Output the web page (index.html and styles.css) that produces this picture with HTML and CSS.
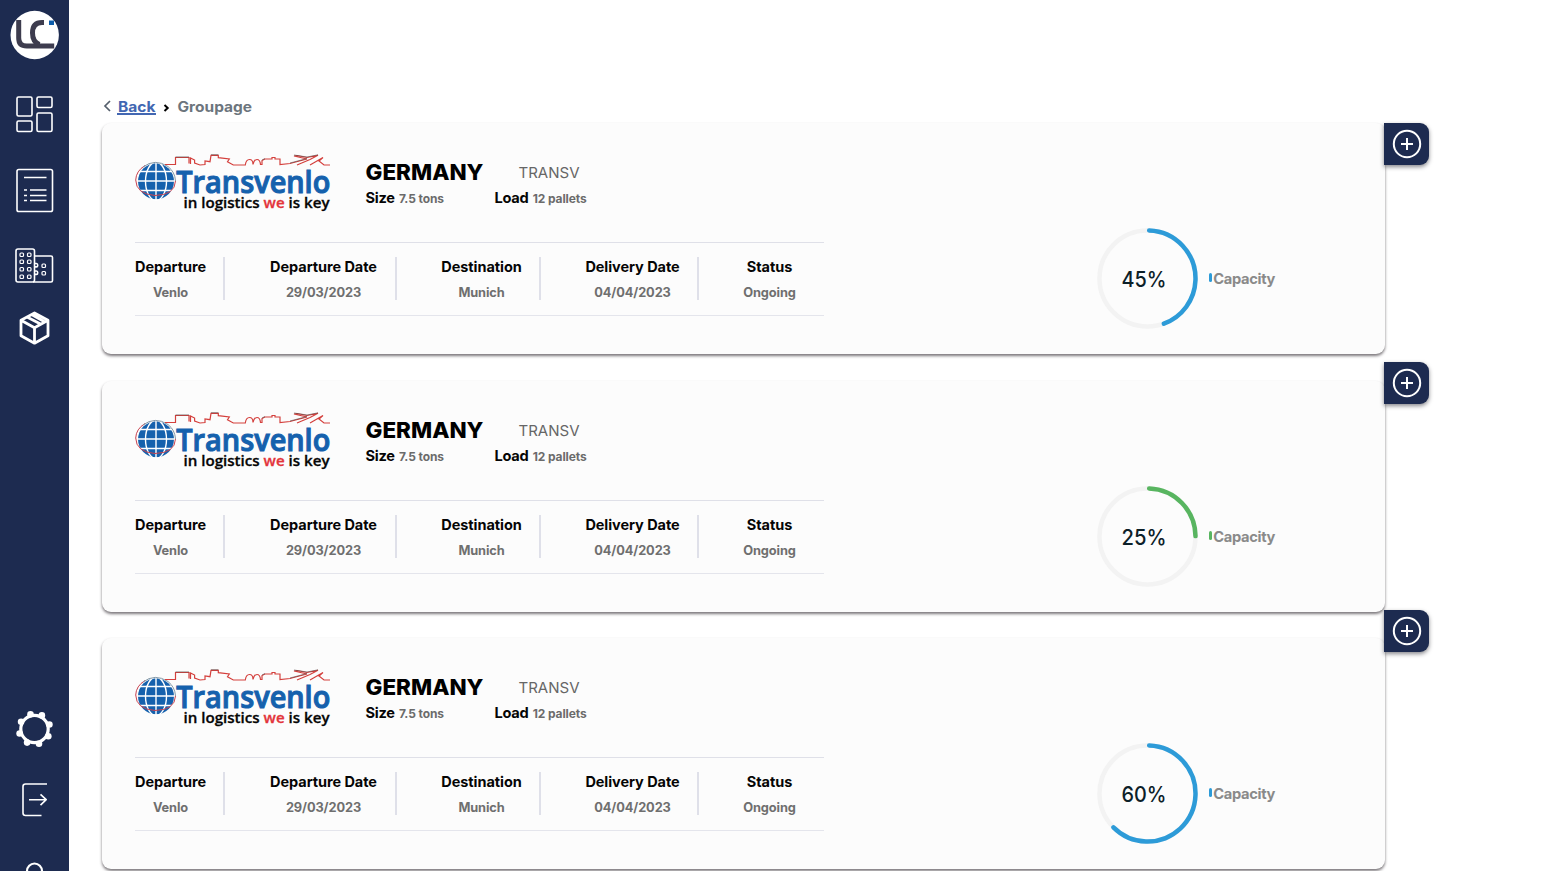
FILE: index.html
```html
<!DOCTYPE html>
<html lang="en">
<head>
<meta charset="utf-8">
<title>Groupage</title>
<link rel="stylesheet" href="styles.css">
</head>
<body>
<aside class="sidebar">
  <svg class="brand" width="50" height="50" viewBox="0 0 50 50"><circle cx="24.700" cy="25" r="24.200" fill="#fff"/><path d="M8.700 10v18q0 8 8 8h27.500M34 12.500h-2q-9.500 0-9.500 10.500 0 9 7 11.500" fill="none" stroke="#3d3c4e" stroke-width="5"/><path d="M39 10.500h5v4.500h-5z" fill="#0b5cab"/></svg>
  <nav class="nav">
    <svg class="i-grid" width="38" height="38" viewBox="0 0 38 38"><rect x="1" y="1" width="15" height="19" rx="1.500"/><rect x="21" y="1" width="15" height="10.500" rx="1.500"/><rect x="1" y="25" width="15" height="10.500" rx="1.500"/><rect x="21" y="17" width="15" height="18.500" rx="1.500"/></svg>
    <svg class="i-list" width="38" height="45" viewBox="0 0 38 45"><rect x="1" y="1.500" width="35.500" height="42" rx="1.800"/><path d="M8 9.500h22.500M8 22h3M14 22h16.500M8 27.500h3M14 27.500h16.500M8 32.500h3M14 32.500h16.500"/></svg>
    <svg class="i-building" width="39" height="36" viewBox="0 0 39 36"><rect x="1" y="1" width="18.500" height="33" rx="2"/><path d="M19.500 8H36q1.500 0 1.500 1.500V32.500Q37.500 34 36 34H18M20 15.500h1.500q1.200 0 1.200 1.700t-1.200 1.700H20M20 23h1.500q1.200 0 1.200 1.700t-1.200 1.700H20"/><g stroke-width="1.200"><rect x="5" y="5" width="3.500" height="3.500" rx="1"/><rect x="12.500" y="5" width="3.500" height="3.500" rx="1"/><rect x="5" y="12" width="3.500" height="3.500" rx="1"/><rect x="12.500" y="12" width="3.500" height="3.500" rx="1"/><rect x="5" y="19.500" width="3.500" height="3.500" rx="1"/><rect x="12.500" y="19.500" width="3.500" height="3.500" rx="1"/><rect x="5" y="27" width="3.500" height="3.500" rx="1"/><rect x="12.500" y="27" width="3.500" height="3.500" rx="1"/><rect x="27" y="16" width="3.500" height="3.500" rx="1"/><rect x="27" y="23.500" width="3.500" height="3.500" rx="1"/></g></svg>
    <svg class="i-box" width="32" height="34" viewBox="0 0 32 34"><path d="M16.500 2 30 9.200V24.800L16.500 32.200 3 24.800V9.200ZM3 9.200 16.500 16.700 30 9.200M16.500 16.700V32M9 6 22.500 13M13.500 3.500 26.500 10.800"/></svg>
    <svg class="i-gear" width="38" height="38" viewBox="0 0 38 38"><circle cx="19.500" cy="19" r="13.700" stroke-width="3.200"/><g fill="#fff" stroke="none"><circle cx="15.500" cy="4.300" r="3.300"/><circle cx="26.900" cy="5.400" r="3.300"/><circle cx="34.400" cy="14.500" r="3.300"/><circle cx="33.300" cy="26.300" r="3.300"/><circle cx="24" cy="33.700" r="3.300"/><circle cx="12.100" cy="32.600" r="3.300"/><circle cx="4.600" cy="23.500" r="3.300"/><circle cx="6.100" cy="11.700" r="3.300"/></g></svg>
    <svg class="i-exit" width="28" height="36" viewBox="0 0 28 36"><path d="M26 2H4.500Q2 2 2 4.500V31Q2 33.500 4.500 33.500H20.500M8 17.700H25M19.500 12.300 25.200 17.700 19.500 23.200"/></svg>
    <svg class="i-user" width="24" height="24" viewBox="0 0 24 24"><circle cx="12.500" cy="11" r="7.500" stroke-width="2.200"/></svg>
  </nav>
</aside>
<main class="main">
  <div class="crumbs">
    <svg class="chev" width="8" height="12" viewBox="0 0 8 12"><path d="M7 1 2 6l5 5"/></svg>
    <a class="back"><svg width="38" height="18"><text x="1" y="15" textLength="37.500" lengthAdjust="spacingAndGlyphs">Back</text></svg></a>
    <svg class="sep" width="6" height="8" viewBox="0 0 6 8"><path d="M1.500 1l3.200 3L1.500 7"/></svg>
    <svg class="current" width="75" height="20"><text x="-.5" y="15" textLength="74.500" lengthAdjust="spacingAndGlyphs">Groupage</text></svg>
  </div>
  <div class="board">
    <section class="cards" id="cards"></section>
    <div class="tabs" id="tabs"></div>
  </div>
</main>
<script src="cards.js"></script>
</body>
</html>
```
FILE: styles.css
```css
* { box-sizing: border-box; }
body { margin: 0; height: 871px; overflow: hidden; display: flex; background: #fff; font-family: Inter, sans-serif; color: #050505; }
svg { display: block; flex: none; overflow: visible; }
.sidebar { width: 69px; height: 871px; background: #1d2b50; flex: none; overflow: hidden; padding-top: 10px; }
.brand { margin-left: 10px; }
.nav { display: flex; flex-direction: column; }
.nav svg { fill: none; stroke: #fff; stroke-width: 1.6; stroke-linejoin: round; stroke-linecap: butt; }
.nav .i-grid { margin: 36px 0 0 16px; }
.nav .i-list { margin: 34px 0 0 16px; }
.nav .i-building { margin: 35px 0 0 15px; }
.nav .i-box { margin: 27px 0 0 18px; stroke-width: 2.8; }
.nav .i-gear { margin: 365px 0 0 15px; }
.nav .i-exit { margin: 34px 0 0 21px; }
.nav .i-user { margin: 42px 0 0 22px; }
.main { flex: 1; padding: 97px 0 0 32px; }
.crumbs { display: flex; height: 26px; padding-left: 2px; font: 700 14px Inter, sans-serif; }
.chev { margin-top: 3px; fill: none; stroke: #555f6c; stroke-width: 1.7; }
.back { margin-left: 6px; width: 39px; height: 18px; border-bottom: 2px solid #4267b2; fill: #4267b2; }
.sep { margin: 7px 0 0 7px; fill: none; stroke: #000; stroke-width: 2; }
.current { margin-left: 9px; fill: #6c757d; }
.board { display: flex; }
.cards { width: 1283px; display: flex; flex-direction: column; gap: 26.6px; margin-left: 1px; }
.card { height: 231px; flex: none; background: #fcfcfc; border-radius: 9px; box-shadow: 0 2px 3px rgba(35,28,35,.6); display: flex; justify-content: space-between; padding: 29px 110px 0 33px; }
.info { width: 689px; }
.head { display: flex; height: 90px; }
.titles { margin-left: 33.500px; }
.title-row { display: flex; height: 36px; padding-top: 9px; }
.country { font-weight: 800; font-size: 21.7px; }
.code { font-size: 14.5px; fill: #666; margin-left: 35.500px; }
.specs { display: flex; align-items: baseline; font-size: 14.6px; font-weight: 700; line-height: 20px; letter-spacing: -.25px; }
.spec { width: 129px; white-space: nowrap; }
.spec small { font-size: 12px; color: #6b6b6b; letter-spacing: -.1px; margin-left: 1px; }
.facts { display: flex; height: 74px; padding-top: 14px; border-top: 1px solid #dfe0e8; border-bottom: 1px solid #e4e5ec; }
.fact { height: 43px; text-align: center; border-right: 2px solid #dfe0e9; padding: 0 17px 0 44px; white-space: nowrap; font-size: 14.5px; font-weight: 700; line-height: 19px; letter-spacing: -.06px; width: 172px; }
.fact:first-child { width: 90px; padding-left: 0; }
.fact:nth-child(3) { width: 144px; }
.fact:nth-child(4) { width: 158px; }
.fact:last-child { width: 125px; border: 0; padding: 0 28px 0 44px; }
.fact span { display: flex; justify-content: center; }
.fact .value { margin-top: 7px; font-size: 12.8px; font-weight: 700; color: #6f6f6f; letter-spacing: -.1px; }
.gauge { display: flex; padding-top: 76px; }
.gauge text { font: 500 22px Inter, sans-serif; fill: #0c2028; }
.legend { display: flex; align-items: center; height: 20px; margin: 41px 0 0 11px; font-size: 14.7px; font-weight: 700; color: #8a8a8a; letter-spacing: -.35px; }
.dot { width: 3px; height: 9px; border-radius: 2px; margin-right: 1px; margin-top: -3px; }
.blue { background: #2d9bd8; stroke: #2d9bd8; }
.green { background: #58b560; stroke: #58b560; }
.tabs { position: relative; z-index: 1; margin-left: -1px; display: flex; flex-direction: column; }
.tab { width: 45px; height: 42px; background: #1d2b50; border: 0; padding: 6px 8px; border-radius: 0 9px 9px 0; box-shadow: 0 2px 4px rgba(20,20,30,.5); margin-bottom: 206.500px; }
.tab:first-child { margin-bottom: 196.500px; }
.tab path, .tab circle { fill: none; stroke: #fff; stroke-width: 2; }
.arc { background: none; }
```
FILE: cards.js
```js
const logo = `<svg class="logo" width="197" height="60" viewBox="0 0 197 60">
<circle cx="21" cy="29.300" r="18" fill="#1561ad"/>
<g fill="none" stroke="#fff" stroke-width="1.400"><path d="M21 10v39M2 29h38M5 19.500h32M5 38.500h32"/><ellipse cx="21" cy="29.300" rx="10.500" ry="19"/></g>
<path d="M10 13.500Q1 19 .700 28Q1 42 20 43.500Q40 43 40.500 29" fill="none" stroke="#c94350" stroke-width="1"/>
<path d="M8 15Q20 6 33 14.500Q40 20 40.500 29" fill="none" stroke="#8297a6" stroke-width="1"/>
<path d="M30 12.500H40.500V5.500H54V11.500M55.500 12V6L59.600 8V11L65 13 70 12.500V9L75 9.700 76 3.300H83.300V5.700L94.300 7 92.500 9.700 98.300 13H110.300Q111 7.500 114.500 7.500T118 12.500Q119 7.500 122 7.500T125.500 12.500H127V8.500L130 7H137V5.500H140V7H145V12.500L155 11.500 172 7 159 4 162 3.500 172 5.500 183 3.300 175 7.500 162 13M175 13 188 5.500 184 9 189 13H195" fill="none" stroke="#d4403d" stroke-width="1.200"/>
<path d="M40.500 4.900H54M76 2.700H83.300M127 8L130 6.500M159 3L172 5 183 2.800M155 11L172 6.500" fill="none" stroke="#544b4b" stroke-width=".6"/>
<text x="41.300" y="40.500" textLength="154" lengthAdjust="spacingAndGlyphs" font-family="Open Sans, sans-serif" font-weight="600" font-size="31.500" fill="#1561ad" stroke="#1561ad" stroke-width="1.100">Transvenlo</text>
<text x="48.500" y="55.500" textLength="146" lengthAdjust="spacingAndGlyphs" font-family="Open Sans, sans-serif" font-weight="600" font-size="14.500" fill="#050505" stroke="#050505" stroke-width=".3">in logistics <tspan fill="#e3343b" stroke="#e3343b">we</tspan> is key</text>
</svg>`;

const shipments = [
  { pct: 45, arc: 43.900, tone: "blue" },
  { pct: 25, arc: 24.300, tone: "green" },
  { pct: 60, arc: 62, tone: "blue" }
];

const facts = [
  ["Departure", "Venlo"],
  ["Departure Date", "29/03/2023"],
  ["Destination", "Munich"],
  ["Delivery Date", "04/04/2023"],
  ["Status", "Ongoing"]
];

document.getElementById("cards").innerHTML = shipments.map(s => `
<article class="card">
  <div class="info">
    <div class="head">${logo}
      <div class="titles">
        <div class="title-row">
          <svg class="country" width="118" height="24"><text x="-.5" y="19" textLength="118" lengthAdjust="spacingAndGlyphs">GERMANY</text></svg>
          <svg class="code" width="61" height="22"><text x="-.5" y="16.500" textLength="61" lengthAdjust="spacingAndGlyphs">TRANSV</text></svg>
        </div>
        <div class="specs"><div class="spec">Size <small>7.5 tons</small></div><div class="spec">Load <small>12 pallets</small></div></div>
      </div>
    </div>
    <div class="facts">${facts.map(f => `<div class="fact"><span>${f[0]}</span><span class="value">${f[1]}</span></div>`).join("")}</div>
  </div>
  <div class="gauge">
    <svg width="101" height="101" viewBox="0 0 101 101">
      <circle cx="50.500" cy="50.500" r="48" fill="none" stroke="#f3f3f3" stroke-width="4.500"/>
      <circle class="arc ${s.tone}" cx="50.500" cy="50.500" r="48" fill="none" stroke-width="4.500" stroke-linecap="round" pathLength="100" stroke-dasharray="${s.arc} 100" transform="rotate(-88 50.500 50.500)"/>
      <text x="24.500" y="59" textLength="45" lengthAdjust="spacingAndGlyphs">${s.pct}%</text>
    </svg>
    <div class="legend"><i class="dot ${s.tone}"></i>Capacity</div>
  </div>
</article>`).join("");

document.getElementById("tabs").innerHTML = shipments.map(() => `
<button class="tab" aria-label="Add"><svg width="30" height="30" viewBox="0 0 30 30"><circle cx="15" cy="15" r="13.200"/><path d="M15 9v12M9 15h12"/></svg></button>`).join("");
```
